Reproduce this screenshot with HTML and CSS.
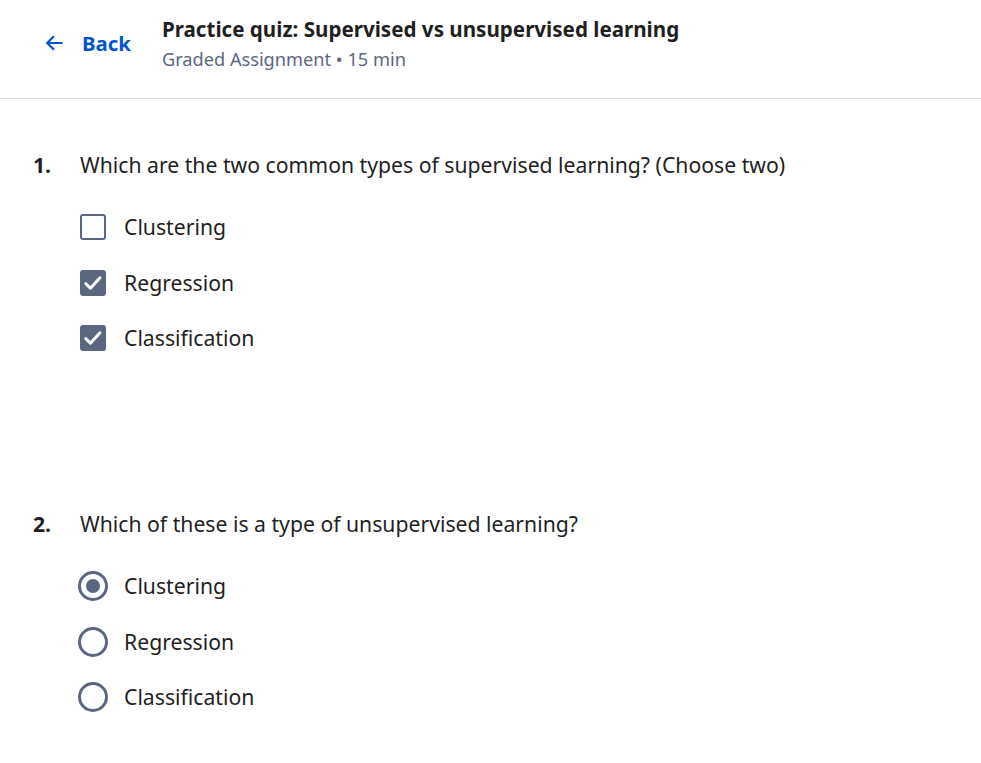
FILE: index.html
```html
<!DOCTYPE html>
<html>
<head>
<meta charset="utf-8">
<link rel="stylesheet" href="styles.css">
</head>
<body>
<header class="topbar">
  <a class="back" href="#">
    <svg class="back-icon" viewBox="0 0 18 18" width="18" height="18"><path d="M17.5 9H2.5M9 2.2L2.2 9 9 15.8" fill="none" stroke="currentColor" stroke-width="2.2"/></svg>
    <span>Back</span>
  </a>
  <div class="titles">
    <h1 class="title">Practice quiz: Supervised vs unsupervised learning</h1>
    <div class="subtitle">Graded Assignment • 15 min</div>
  </div>
</header>
<main class="quiz">
  <section class="question q1">
    <div class="q-head"><span class="q-num">1.</span><span class="q-text">Which are the two common types of supervised learning? (Choose two)</span></div>
    <div class="options">
      <div class="option"><span class="checkbox"></span><span class="label">Clustering</span></div>
      <div class="option"><span class="checkbox checked"><svg viewBox="0 0 26 26" width="26" height="26"><path d="M5.8 13.6l4.6 4.6 9.6-10.4" fill="none" stroke="#fff" stroke-width="3" stroke-linecap="round" stroke-linejoin="round"/></svg></span><span class="label">Regression</span></div>
      <div class="option"><span class="checkbox checked"><svg viewBox="0 0 26 26" width="26" height="26"><path d="M5.8 13.6l4.6 4.6 9.6-10.4" fill="none" stroke="#fff" stroke-width="3" stroke-linecap="round" stroke-linejoin="round"/></svg></span><span class="label">Classification</span></div>
    </div>
  </section>
  <section class="question q2">
    <div class="q-head"><span class="q-num">2.</span><span class="q-text">Which of these is a type of unsupervised learning?</span></div>
    <div class="options">
      <div class="option"><span class="radio checked"></span><span class="label">Clustering</span></div>
      <div class="option"><span class="radio"></span><span class="label">Regression</span></div>
      <div class="option"><span class="radio"></span><span class="label">Classification</span></div>
    </div>
  </section>
</main>
</body>
</html>
```
FILE: styles.css
```css
* { box-sizing: border-box; }
body {
  margin: 0;
  background: #fff;
  font-family: "Noto Sans", "Open Sans", sans-serif;
  color: #1f1f1f;
}
.topbar {
  display: flex;
  align-items: flex-start;
  height: 99px;
  border-bottom: 1px solid #dae1ed;
  padding: 14px 0 0 45px;
}
.back {
  display: flex;
  align-items: center;
  gap: 19px;
  color: #0056d2;
  text-decoration: none;
  font-weight: 700;
  font-size: 20.4px;
  margin-top: 15px;
}
.back-icon { display: block; }
.titles { margin-left: 31px; }
.title {
  margin: 0;
  font-size: 20.6px;
  font-weight: 700;
  line-height: 30px;
  color: #1f1f1f;
}
.subtitle {
  font-size: 18.2px;
  color: #5b6780;
  line-height: 30px;
}
.quiz { padding: 50px 0 0 33px; }
.q2 { margin-top: 155px; }
.q-head { display: flex; align-items: baseline; font-size: 21.2px; line-height: 32px; }
.q-num { width: 47px; font-weight: 700; }
.options { padding-left: 47px; margin-top: 31px; display: flex; flex-direction: column; gap: 25.5px; }
.option { display: flex; align-items: center; gap: 18px; font-size: 21.2px; line-height: 30px; }
.checkbox {
  width: 26px; height: 26px;
  border: 2.5px solid #5b6780;
  border-radius: 3px;
  display: flex; align-items: center; justify-content: center;
  overflow: hidden;
}
.checkbox svg { flex: none; }
.checkbox.checked { background: #5b6780; }
.radio {
  width: 30px; height: 30px;
  margin-left: -2px;
  margin-right: -2px;
  border: 3px solid #5b6780;
  border-radius: 50%;
  position: relative;
}
.radio.checked::after {
  content: "";
  position: absolute;
  left: 50%; top: 50%;
  width: 14px; height: 14px;
  margin: -7px 0 0 -7px;
  border-radius: 50%;
  background: #5b6780;
}
```
